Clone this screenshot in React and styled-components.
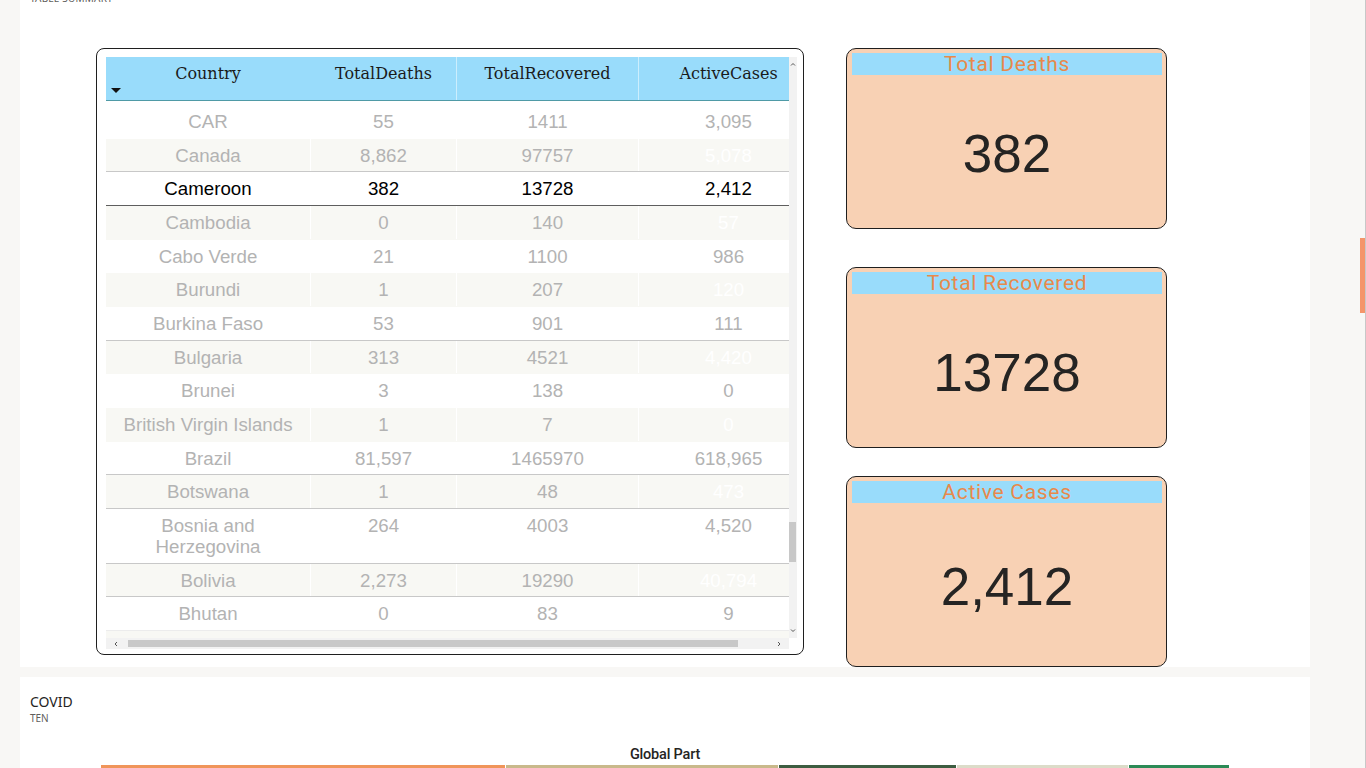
import React from 'react';
import styled, { createGlobalStyle } from 'styled-components';

const rows = [
  { country: 'CAR', deaths: '55', recovered: '1411', active: '3,095' },
  { country: 'Canada', deaths: '8,862', recovered: '97757', active: '5,078', line: 'grey' },
  { country: 'Cameroon', deaths: '382', recovered: '13728', active: '2,412', line: 'dark', selected: true },
  { country: 'Cambodia', deaths: '0', recovered: '140', active: '57' },
  { country: 'Cabo Verde', deaths: '21', recovered: '1100', active: '986' },
  { country: 'Burundi', deaths: '1', recovered: '207', active: '120' },
  { country: 'Burkina Faso', deaths: '53', recovered: '901', active: '111', line: 'grey' },
  { country: 'Bulgaria', deaths: '313', recovered: '4521', active: '4,420' },
  { country: 'Brunei', deaths: '3', recovered: '138', active: '0' },
  { country: 'British Virgin Islands', deaths: '1', recovered: '7', active: '0' },
  { country: 'Brazil', deaths: '81,597', recovered: '1465970', active: '618,965', line: 'grey' },
  { country: 'Botswana', deaths: '1', recovered: '48', active: '473', line: 'grey' },
  { country: 'Bosnia and Herzegovina', deaths: '264', recovered: '4003', active: '4,520', line: 'grey' },
  { country: 'Bolivia', deaths: '2,273', recovered: '19290', active: '40,794', line: 'grey' },
  { country: 'Bhutan', deaths: '0', recovered: '83', active: '9', line: 'faint' },
];

const cards = [
  { title: 'Total Deaths', value: '382', height: 181, gap: 0 },
  { title: 'Total Recovered', value: '13728', height: 181, gap: 38 },
  { title: 'Active Cases', value: '2,412', height: 191, gap: 28 },
];

const treemap = [
  { color: '#f0955a', width: 404 },
  { color: '#c9b98b', width: 272 },
  { color: '#3d5d41', width: 177 },
  { color: '#dcdcc9', width: 171 },
  { color: '#2c8a56', width: 100 },
];

const lineColors = { grey: '#c8c8c8', dark: '#5e5e5e', faint: '#ececec' };

const GlobalStyle = createGlobalStyle`
  html, body {
    margin: 0;
    padding: 0;
    overflow: hidden;
    background: #f8f7f5;
  }
  * { box-sizing: border-box; }
`;

const Page = styled.div`
  width: 1366px;
  height: 768px;
  padding: 0 56px 0 20px;
  overflow: hidden;
`;

const Panel = styled.section`
  background: #fff;
  margin-top: ${(p) => p.$offset || 0}px;
`;

const PanelLabel = styled.div`
  font-family: 'Noto Sans', 'Open Sans', sans-serif;
  font-size: 10px;
  line-height: 12px;
  color: #605e5c;
  padding-left: 10px;
  letter-spacing: 0.2px;
`;

const SummaryRow = styled.div`
  display: flex;
  align-items: flex-start;
  gap: 42px;
  margin-top: 44px;
  padding-left: 76px;
`;

const TableCard = styled.div`
  width: 708px;
  height: 607px;
  border: 1px solid #1f1f1f;
  border-radius: 8px;
  padding: 8px 6px 5px 9px;
  display: grid;
  grid-template-columns: 683px 8px;
  grid-template-rows: 581px 11px;
`;

const Viewport = styled.div`
  overflow: hidden;
  background: #fff;
`;

const cols = '205px 146px 182px 180px';

const HeaderRow = styled.div`
  display: grid;
  grid-template-columns: ${cols};
  width: 713px;
  height: 44px;
  background: #99dcfb;
  border-bottom: 1px solid #4f9aa6;
`;

const HeaderCell = styled.div`
  display: flex;
  flex-direction: column;
  align-items: center;
  padding-top: 7px;
  font-family: 'DejaVu Serif', 'Liberation Serif', serif;
  font-size: 16px;
  line-height: 19px;
  color: #1a1a1a;
  border-right: 1px solid ${(p) => (p.$divider ? 'rgba(255,255,255,0.5)' : 'transparent')};
`;

const SortArrow = styled.span`
  align-self: flex-start;
  margin: 5px 0 0 5px;
  width: 0;
  height: 0;
  border-left: 5px solid transparent;
  border-right: 5px solid transparent;
  border-top: 5px solid #111;
`;

const Body = styled.div`
  padding-top: 4px;
`;

const Row = styled.div`
  display: grid;
  grid-template-columns: ${cols};
  width: 713px;
  min-height: 33.66px;
  align-items: start;
  background: ${(p) => (p.$alt ? '#f8f8f4' : '#fff')};
  border-bottom: 1px solid ${(p) => lineColors[p.$line] || (p.$alt ? '#f8f8f4' : '#fff')};
`;

const Cell = styled.div`
  padding: 6px 8px 5.66px;
  text-align: center;
  font-family: 'Liberation Sans', Arial, sans-serif;
  font-size: 18.7px;
  line-height: 21px;
  color: ${(p) => (p.$selected ? '#000' : p.$hidden ? '#ffffff' : '#b3b3b3')};
  border-right: 1px solid ${(p) => (p.$alt ? '#fff' : 'transparent')};
`;

const VScroll = styled.div`
  display: flex;
  flex-direction: column;
  align-items: center;
  background: #f2f2f2;
`;

const ScrollArrow = styled.svg`
  flex: none;
  display: block;
`;

const VTrack = styled.div`
  flex: 1;
  width: 100%;
`;

const VThumb = styled.div`
  width: 7px;
  height: 40px;
  background: #c8c8c8;
`;

const HScroll = styled.div`
  display: flex;
  align-items: center;
  background: #f2f2f2;
  padding: 0 6px;
`;

const HTrack = styled.div`
  flex: 1;
  height: 7px;
  margin: 0 8px;
`;

const HThumb = styled.div`
  height: 7px;
  background: #c8c8c8;
`;

const CardColumn = styled.div`
  display: flex;
  flex-direction: column;
  width: 321px;
`;

const KpiCard = styled.div`
  display: flex;
  flex-direction: column;
  height: ${(p) => p.$height}px;
  margin-top: ${(p) => p.$gap}px;
  background: #f8d1b4;
  border: 1px solid #1f1f1f;
  border-radius: 10px;
  padding: 4px 4px 4px 5px;
`;

const KpiTitle = styled.div`
  height: 22px;
  background: #99dcfb;
  text-align: center;
  font-family: Roboto, 'Noto Sans', sans-serif;
  font-size: 21px;
  line-height: 22px;
  letter-spacing: 0.7px;
  color: #e8894b;
`;

const KpiValue = styled.div`
  flex: 1;
  display: flex;
  align-items: center;
  justify-content: center;
  font-family: 'Liberation Sans', Arial, sans-serif;
  font-size: 53px;
  color: #252423;
  padding-top: 8px;
`;

const ChartPanel = styled(Panel)`
  height: 100px;
  padding: 15px 0 0 10px;
`;

const ChartTitle = styled.div`
  font-family: 'Noto Sans', 'Open Sans', sans-serif;
  font-size: 14px;
  line-height: 19px;
  color: #252423;
`;

const ChartSubtitle = styled.div`
  margin-top: 1px;
  font-family: 'Noto Sans', 'Open Sans', sans-serif;
  font-size: 10px;
  line-height: 12px;
  color: #605e5c;
`;

const TreemapLabel = styled.div`
  margin-top: 22px;
  text-align: center;
  padding-right: 10px;
  font-family: Roboto, 'Noto Sans', sans-serif;
  font-weight: 500;
  font-size: 14.5px;
  line-height: 18px;
  color: #252423;
  letter-spacing: -0.2px;
`;

const Treemap = styled.div`
  display: flex;
  gap: 1px;
  margin: 1px 0 0 71px;
`;

const Tile = styled.div`
  height: 40px;
  width: ${(p) => p.$width}px;
  background: ${(p) => p.$color};
`;

const PageScroll = styled.div`
  position: fixed;
  top: 0;
  right: 0;
  width: 6px;
  height: 768px;
  border-right: 1px solid #c8c8c8;
`;

const PageThumb = styled.div`
  position: absolute;
  top: 238px;
  left: 0;
  width: 5px;
  height: 75px;
  background: #f4956a;
`;

const Chevron = ({ d, w = 8, h = 8 }) => (
  <ScrollArrow width={w} height={h} viewBox='0 0 8 8'>
    <path d={d} fill='none' stroke='#555' strokeWidth='1' />
  </ScrollArrow>
);

const App = () => {
  return (
    <>
      <GlobalStyle />
      <Page>
        <Panel $offset={-8}>
          <PanelLabel>TABLE SUMMARY</PanelLabel>
          <SummaryRow>
            <TableCard>
              <Viewport>
                <HeaderRow>
                  <HeaderCell>
                    Country
                    <SortArrow />
                  </HeaderCell>
                  <HeaderCell $divider>TotalDeaths</HeaderCell>
                  <HeaderCell $divider>TotalRecovered</HeaderCell>
                  <HeaderCell>ActiveCases</HeaderCell>
                </HeaderRow>
                <Body>
                  {rows.map((r, i) => {
                    const alt = i % 2 === 1;
                    return (
                      <Row key={r.country} $alt={alt} $line={r.line}>
                        <Cell $alt={alt} $selected={r.selected}>{r.country}</Cell>
                        <Cell $alt={alt} $selected={r.selected}>{r.deaths}</Cell>
                        <Cell $alt={alt} $selected={r.selected}>{r.recovered}</Cell>
                        <Cell $alt={alt} $selected={r.selected} $hidden={alt}>
                          {r.active}
                        </Cell>
                      </Row>
                    );
                  })}
                  <Row $alt />
                </Body>
              </Viewport>
              <VScroll>
                <Chevron d='M2 5.5 L4 3.5 L6 5.5' h={14} />
                <VTrack>
                  <VThumb style={{ marginTop: 451 }} />
                </VTrack>
                <Chevron d='M2 2.5 L4 4.5 L6 2.5' h={14} />
              </VScroll>
              <HScroll>
                <Chevron d='M5 2 L3 4 L5 6' />
                <HTrack>
                  <HThumb style={{ width: 610 }} />
                </HTrack>
                <Chevron d='M3 2 L5 4 L3 6' />
              </HScroll>
              <div />
            </TableCard>
            <CardColumn>
              {cards.map((c) => (
                <KpiCard key={c.title} $height={c.height} $gap={c.gap}>
                  <KpiTitle>{c.title}</KpiTitle>
                  <KpiValue>{c.value}</KpiValue>
                </KpiCard>
              ))}
            </CardColumn>
          </SummaryRow>
        </Panel>
        <ChartPanel $offset={10}>
          <ChartTitle>COVID</ChartTitle>
          <ChartSubtitle>TEN</ChartSubtitle>
          <TreemapLabel>Global Part</TreemapLabel>
          <Treemap>
            {treemap.map((t) => (
              <Tile key={t.color} $color={t.color} $width={t.width} />
            ))}
          </Treemap>
        </ChartPanel>
      </Page>
      <PageScroll>
        <PageThumb />
      </PageScroll>
    </>
  );
};

export default App;
